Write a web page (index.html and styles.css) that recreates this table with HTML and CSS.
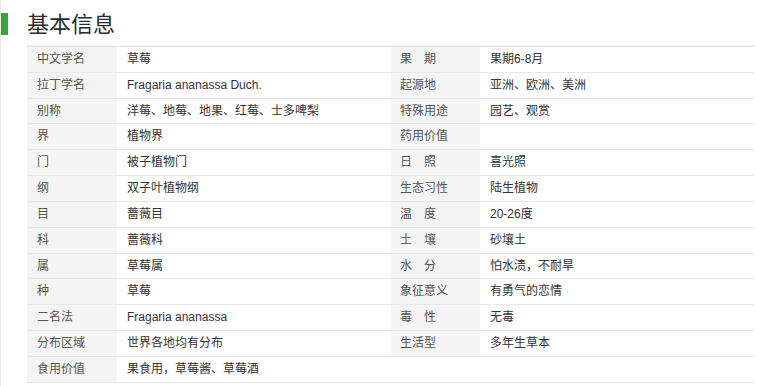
FILE: index.html
```html
<!DOCTYPE html>
<html lang="zh">
<head>
<meta charset="utf-8">
<link rel="stylesheet" href="styles.css">
</head>
<body>
<div class="page">
  <div class="head">
    <span class="bar"></span>
    <h2 class="title">基本信息</h2>
  </div>
  <div class="info">
    <dl class="col col-left">
      <div class="row"><dt>中文学名</dt><dd>草莓</dd></div>
      <div class="row"><dt>拉丁学名</dt><dd>Fragaria ananassa Duch.</dd></div>
      <div class="row"><dt>别称</dt><dd>洋莓、地莓、地果、红莓、士多啤梨</dd></div>
      <div class="row"><dt>界</dt><dd>植物界</dd></div>
      <div class="row"><dt>门</dt><dd>被子植物门</dd></div>
      <div class="row"><dt>纲</dt><dd>双子叶植物纲</dd></div>
      <div class="row"><dt>目</dt><dd>蔷薇目</dd></div>
      <div class="row"><dt>科</dt><dd>蔷薇科</dd></div>
      <div class="row"><dt>属</dt><dd>草莓属</dd></div>
      <div class="row"><dt>种</dt><dd>草莓</dd></div>
      <div class="row"><dt>二名法</dt><dd>Fragaria ananassa</dd></div>
      <div class="row"><dt>分布区域</dt><dd>世界各地均有分布</dd></div>
      <div class="row"><dt>食用价值</dt><dd>果食用，草莓酱、草莓酒</dd></div>
    </dl>
    <dl class="col col-right">
      <div class="row"><dt>果　期</dt><dd>果期6-8月</dd></div>
      <div class="row"><dt>起源地</dt><dd>亚洲、欧洲、美洲</dd></div>
      <div class="row"><dt>特殊用途</dt><dd>园艺、观赏</dd></div>
      <div class="row"><dt>药用价值</dt><dd></dd></div>
      <div class="row"><dt>日　照</dt><dd>喜光照</dd></div>
      <div class="row"><dt>生态习性</dt><dd>陆生植物</dd></div>
      <div class="row"><dt>温　度</dt><dd>20-26度</dd></div>
      <div class="row"><dt>土　壤</dt><dd>砂壤土</dd></div>
      <div class="row"><dt>水　分</dt><dd>怕水渍，不耐旱</dd></div>
      <div class="row"><dt>象征意义</dt><dd>有勇气的恋情</dd></div>
      <div class="row"><dt>毒　性</dt><dd>无毒</dd></div>
      <div class="row"><dt>生活型</dt><dd>多年生草本</dd></div>
      <div class="row row-empty"><dt></dt><dd></dd></div>
    </dl>
  </div>
</div>
</body>
</html>
```

FILE: styles.css
```css
html, body {
  margin: 0;
  padding: 0;
  background: #fff;
}
body {
  font-family: "Liberation Sans", "Noto Sans CJK SC", sans-serif;
  color: #333;
}
.page {
  width: 759px;
  height: 386px;
  overflow: hidden;
  border-left: 1px solid #ececec;
  box-sizing: border-box;
}
.head {
  display: flex;
  align-items: flex-start;
  height: 45px;
  margin-left: -1px;
}
.bar {
  width: 8px;
  height: 22px;
  margin-top: 13px;
  background: #3aa536;
}
.title {
  margin: 8px 0 0 19px;
  font-family: "Noto Sans CJK SC", sans-serif;
  font-weight: 400;
  font-size: 22px;
  line-height: 28px;
  color: #2b2b2b;
}
.info {
  display: flex;
  margin-left: 26px;
  width: 727px;
  border-top: 1px solid #f3f3f3;
}
.col {
  margin: 0;
  padding: 0;
  border-top: 1px solid #e3e3e3;
}
.col-left { width: 364px; }
.col-right { width: 363px; }
.row {
  display: flex;
  height: 24.83px;
  border-bottom: 1px solid #e8e8e8;
  font-size: 12px;
  line-height: 24.83px;
}
dt {
  background: #f4f4f4;
  color: #555;
  padding-left: 10px;
  box-sizing: border-box;
  white-space: nowrap;
}
.col-left dt { width: 90px; }
.col-right dt { width: 89px; padding-left: 9px; }
dd {
  margin: 0;
  padding-left: 10px;
  color: #333;
  white-space: nowrap;
}
.row-empty dt { background: #fff; }
```
